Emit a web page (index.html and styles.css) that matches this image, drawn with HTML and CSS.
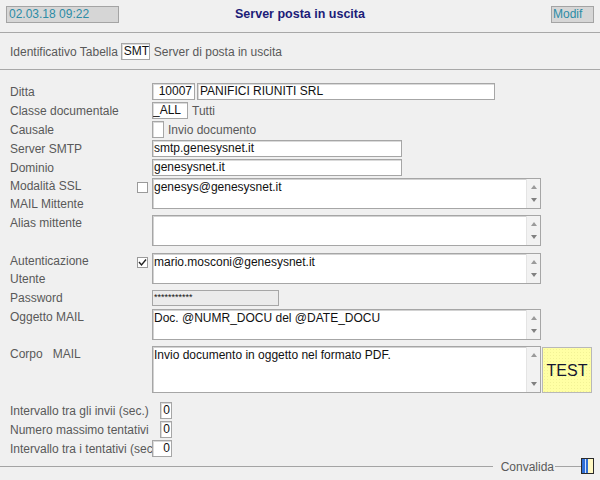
FILE: index.html
```html
<!DOCTYPE html>
<html lang="it">
<head>
<meta charset="utf-8">
<title>Server posta in uscita</title>
<link rel="stylesheet" href="styles.css">
</head>
<body>
<div class="hdr">
  <div class="stamp date">02.03.18 09:22</div>
  <div class="title">Server posta in uscita</div>
  <div class="stamp mod">Modif</div>
</div>
<div class="ident">
  <span class="lbl-i">Identificativo Tabella</span>
  <span class="fld smt">SMT</span>
  <span class="lbl-i desc">Server di posta in uscita</span>
</div>
<div class="form">
  <div class="row r1 line">
    <span class="lbl">Ditta</span>
    <span class="fld code">10007</span>
    <span class="fld name">PANIFICI RIUNITI SRL</span>
  </div>
  <div class="row r2 line">
    <span class="lbl">Classe documentale</span>
    <span class="fld all">_ALL</span>
    <span class="desc-s">Tutti</span>
  </div>
  <div class="row r2 line">
    <span class="lbl">Causale</span>
    <span class="fld tiny"></span>
    <span class="desc-s">Invio documento</span>
  </div>
  <div class="row r2 line">
    <span class="lbl">Server SMTP</span>
    <span class="fld wide">smtp.genesysnet.it</span>
  </div>
  <div class="row r2 line">
    <span class="lbl">Dominio</span>
    <span class="fld wide">genesysnet.it</span>
  </div>
  <div class="row r2 area">
    <div class="lbls short"><span>Modalità SSL</span><span>MAIL Mittente</span></div>
    <div class="cbslot"><span class="cb"></span></div>
    <div class="ta h31"><div class="txt">genesys@genesysnet.it</div><div class="sb"><i class="up"></i><i class="dn"></i></div></div>
  </div>
  <div class="row r6 area">
    <div class="lbls"><span>Alias mittente</span></div>
    <div class="ta h31"><div class="txt"></div><div class="sb"><i class="up"></i><i class="dn"></i></div></div>
  </div>
  <div class="row r7 area">
    <div class="lbls short"><span>Autenticazione</span><span>Utente</span></div>
    <div class="cbslot"><span class="cb on"><svg viewBox="0 0 11 11" width="11" height="11"><polyline points="2,5 4.5,8 9,2.5" fill="none" stroke="#222" stroke-width="1.4"/></svg></span></div>
    <div class="ta h31"><div class="txt">mario.mosconi@genesysnet.it</div><div class="sb"><i class="up"></i><i class="dn"></i></div></div>
  </div>
  <div class="row r6 pw">
    <span class="lbl">Password</span>
    <span class="fld pass">***********</span>
  </div>
  <div class="row r3 area">
    <div class="lbls"><span>Oggetto MAIL</span></div>
    <div class="ta h31"><div class="txt">Doc. @NUMR_DOCU del @DATE_DOCU</div><div class="sb"><i class="up"></i><i class="dn"></i></div></div>
  </div>
  <div class="row r6 area">
    <div class="lbls"><span>Corpo&nbsp;&nbsp; MAIL</span></div>
    <div class="ta h47"><div class="txt">Invio documento in oggetto nel formato PDF.</div><div class="sb"><i class="up"></i><i class="dn"></i></div></div>
    <div class="test">TEST</div>
  </div>
  <div class="row r9 line">
    <span class="lbl lw">Intervallo tra gli invii (sec.)</span>
    <span class="fld num">0</span>
  </div>
  <div class="row r2 line">
    <span class="lbl lw">Numero massimo tentativi</span>
    <span class="fld num">0</span>
  </div>
  <div class="row r2 line">
    <span class="lbl clip">Intervallo tra i tentativi (sec.)</span>
    <span class="fld num2">0</span>
  </div>
</div>
<div class="foot">
  <span class="ln ln1"></span>
  <span class="conv">Convalida</span>
  <span class="ln ln2"></span>
  <span class="icon"></span>
</div>
</body>
</html>
```
FILE: styles.css
```css
* { box-sizing: border-box; }
html, body { margin: 0; padding: 0; }
body {
  width: 600px;
  height: 480px;
  overflow: hidden;
  background: #f0f0f0;
  font-family: "Liberation Sans", Arial, sans-serif;
  font-size: 12px;
  color: #595959;
}

/* header */
.hdr {
  height: 33px;
  border-bottom: 1px solid #a8a8a8;
  display: grid;
  grid-template-columns: 1fr auto 1fr;
  align-items: start;
  padding: 6px 6px 0 6px;
}
.stamp {
  height: 17px;
  line-height: 15px;
  border: 1px solid #a4a4a4;
  background: #d6d6d6;
  color: #2c8ca6;
  font-size: 12px;
  padding-left: 2px;
}
.date { width: 113px; }
.mod { width: 43px; justify-self: end; padding-left: 1px; }
.title {
  color: #1c1c78;
  font-weight: bold;
  font-size: 12.5px;
  line-height: 17px;
}

/* ident */
.ident {
  height: 37px;
  border-bottom: 1px solid #a8a8a8;
  display: flex;
  align-items: center;
  padding-left: 10px;
  padding-top: 1px;
}
.lbl-i { white-space: nowrap; }
.ident .smt {
  width: 29px;
  height: 17px;
  margin-left: 3px;
  padding-left: 2px;
}
.desc { margin-left: 4px; }

/* fields */
.fld {
  display: block;
  background: #fff;
  border: 1px solid #a6a6a6;
  box-shadow: inset 1px 1px 0 #dadada;
  color: #111;
  height: 17px;
  line-height: 15px;
  white-space: nowrap;
  overflow: hidden;
  flex: none;
}

.form {
  display: flex;
  flex-direction: column;
  padding-top: 13px;
  padding-left: 10px;
}
.row { display: flex; flex: none; }
.row.line { height: 17px; align-items: center; }
.row.pw { height: 16px; align-items: center; }
.row.area { align-items: flex-start; }
.r2 { margin-top: 2px; }
.r3 { margin-top: 3px; }
.r6 { margin-top: 6px; }
.r7 { margin-top: 7px; }
.r9 { margin-top: 9px; }

.lbl { width: 142px; flex: none; white-space: nowrap; }
.lbl.lw { width: 150px; }
.lbl.clip { width: 142px; overflow: hidden; }

.code { width: 43px; text-align: right; padding-right: 2px; }
.name { width: 298px; margin-left: 2px; padding-left: 2px; }
.all { width: 36px; }
.tiny { width: 12px; }
.wide { width: 250px; padding-left: 1px; }
.desc-s { margin-left: 4px; white-space: nowrap; }
.pass {
  width: 127px;
  height: 16px;
  background: #ebebeb;
  box-shadow: none;
  font-size: 9px;
  line-height: 12px;
  padding-left: 1px;
}
.num { width: 12px; text-align: right; padding-right: 1px; }
.num2 { width: 20px; text-align: right; padding-right: 1px; }

/* textarea rows */
.lbls {
  width: 142px;
  flex: none;
  display: flex;
  flex-direction: column;
  line-height: 18px;
  margin-top: -1px;
  height: 0;
  overflow: visible;
  white-space: nowrap;
}
.lbls.short { width: 127px; }
.cbslot { width: 15px; flex: none; padding-top: 4px; }
.cb {
  display: block;
  width: 11px;
  height: 11px;
  background: #fff;
  border: 1px solid #9a9a9a;
  position: relative;
}
.cb svg { position: absolute; left: -1px; top: -1px; }

.ta {
  width: 389px;
  flex: none;
  display: flex;
  background: #fff;
  border: 1px solid #a6a6a6;
  box-shadow: inset 1px 1px 0 #d2d2d2;
}
.h31 { height: 31px; }
.h47 { height: 47px; }
.txt {
  flex: 1;
  color: #111;
  padding: 1px 0 0 1px;
  line-height: 14px;
  white-space: nowrap;
}
.sb {
  width: 14px;
  flex: none;
  background: #f2f2f2;
  border-left: 1px solid #e4e4e4;
  display: flex;
  flex-direction: column;
  justify-content: space-between;
  align-items: center;
  padding: 6px 0 6px 0;
}
.sb i { display: block; width: 0; height: 0; border-left: 3.5px solid transparent; border-right: 3.5px solid transparent; }
.sb .up { border-bottom: 4px solid #9a9a9a; }
.sb .dn { border-top: 4px solid #808080; }

.test {
  width: 50px;
  height: 46px;
  margin-left: 1px;
  margin-top: 1px;
  background-color: #ffffa4;
  background-image: radial-gradient(circle, #f2f296 0.6px, transparent 0.8px);
  background-size: 3px 3px;
  border: 1px solid #b8b8b8;
  color: #151530;
  font-size: 16px;
  display: flex;
  align-items: center;
  justify-content: center;
  padding-top: 2px;
}

/* footer */
.foot {
  display: flex;
  align-items: center;
  height: 17px;
  margin-top: 1px;
  padding-right: 6px;
}
.ln { height: 1px; background: #a4a4a4; display: block; }
.ln1 { flex: 1; }
.conv { margin: 0 1px 0 8px; color: #5a5a5a; }
.ln2 { width: 26px; }
.icon {
  width: 13px;
  height: 16px;
  border: 1px solid #2a2a2a;
  background: linear-gradient(to right, #2f6fd6 0, #2f6fd6 3px, #cfe0ff 3px, #cfe0ff 4px, #2f6fd6 4px, #2f6fd6 6px, #fff8c2 6px);
  margin-top: -1px;
}
```
